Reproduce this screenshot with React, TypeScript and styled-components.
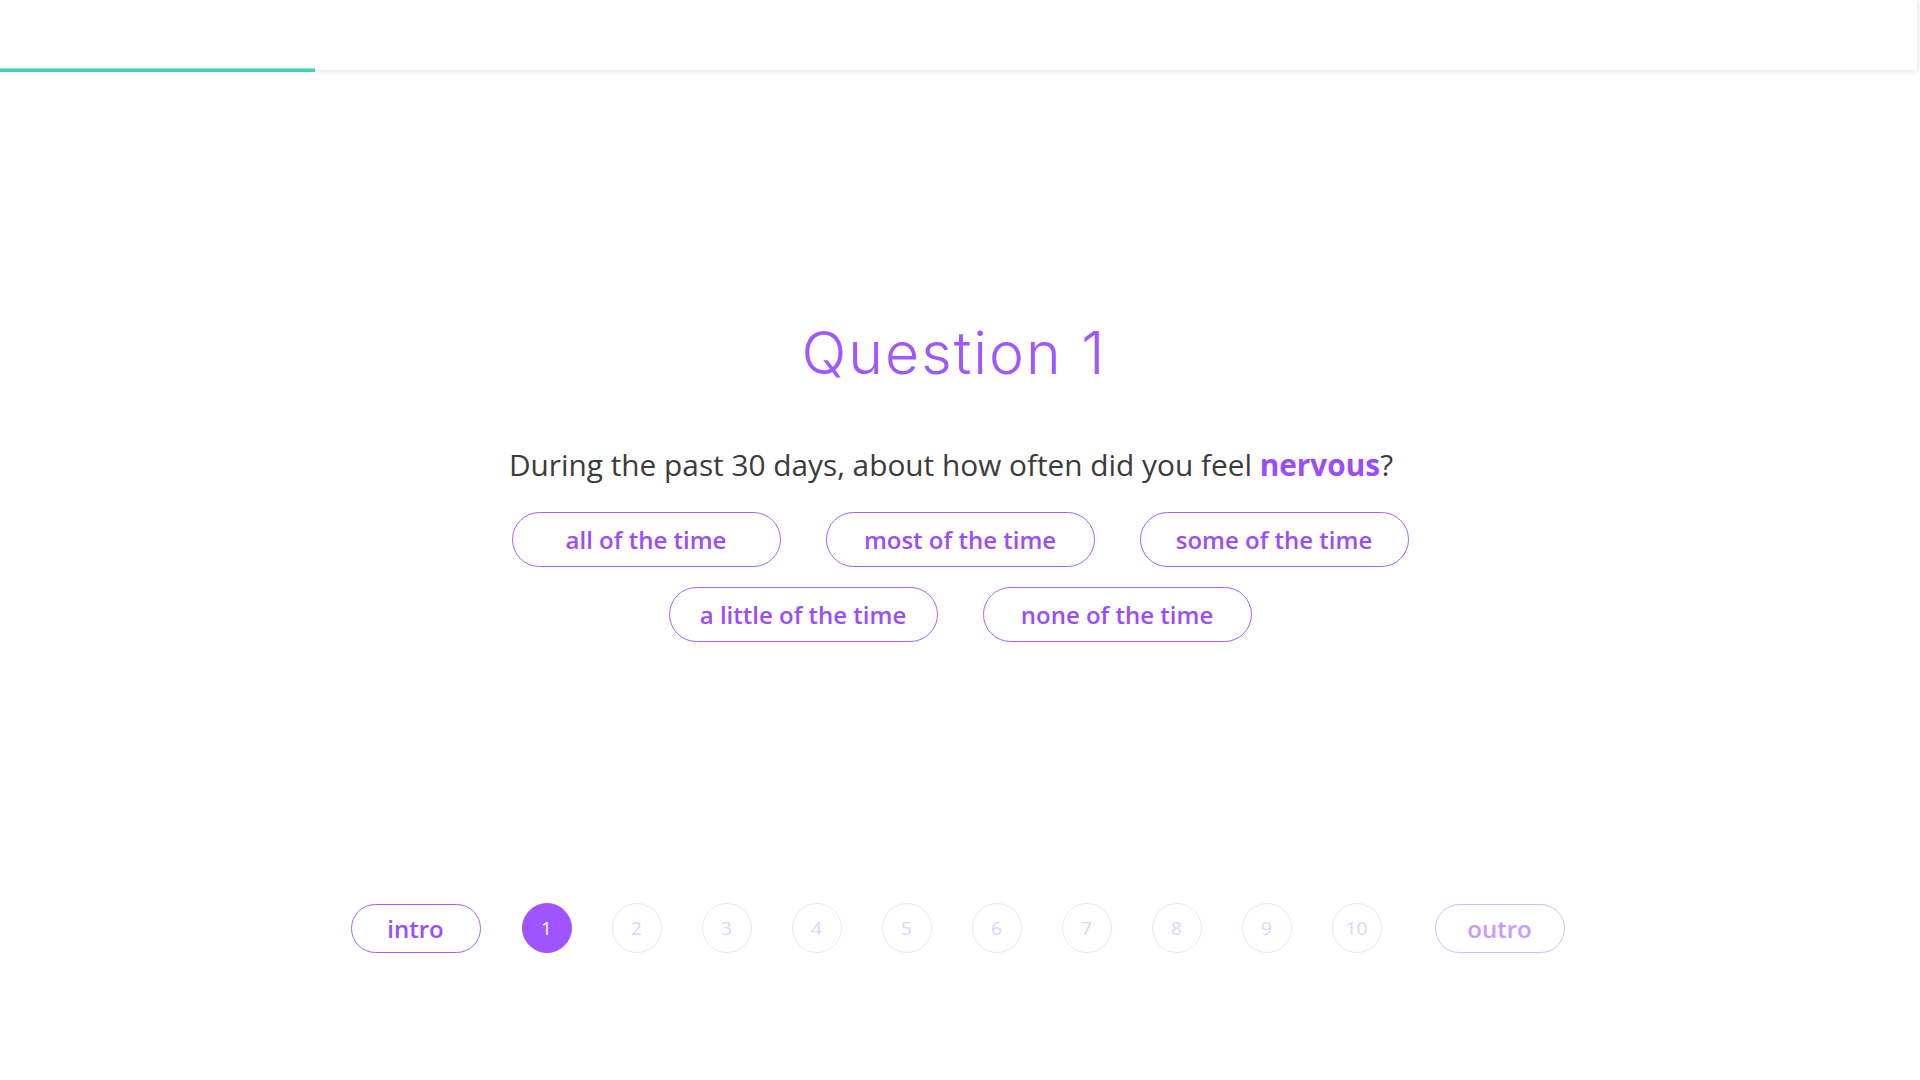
import React from "react";
import styled, { createGlobalStyle } from "styled-components";

const GlobalStyle = createGlobalStyle`
  html, body {
    margin: 0;
    padding: 0;
    background: #ffffff;
  }
  body {
    font-family: "Open Sans", "Noto Sans", sans-serif;
    -webkit-font-smoothing: antialiased;
  }
`;

const Page = styled.div`
  min-height: 1080px;
  display: flex;
  flex-direction: column;
  align-items: center;
`;

const Header = styled.header`
  position: relative;
  align-self: flex-start;
  width: calc(100% - 3px);
  height: 70px;
  background: #ffffff;
  box-shadow: 0 2px 5px rgba(0, 0, 0, 0.07), 2px 0 4px rgba(0, 0, 0, 0.05);
`;

const Progress = styled.div`
  position: absolute;
  left: 0;
  bottom: -2px;
  height: 4px;
  background: #3fcfb4;
  border-top: 1px solid #8ee3d3;
  box-sizing: border-box;
`;

const Title = styled.h1`
  margin: 247px 12px 0 0;
  font-family: Inter, "Noto Sans", sans-serif;
  font-weight: 300;
  font-size: 59px;
  line-height: 72px;
  color: #9f57ff;
  letter-spacing: 2px;
`;

const Prompt = styled.p`
  margin: 56px 18px 0 0;
  font-size: 29.8px;
  line-height: 40px;
  color: #3b3b3b;
`;

const Emph = styled.strong`
  font-weight: 700;
  color: #9a4dff;
`;

const Answers = styled.div`
  margin-top: 27px;
  display: flex;
  flex-direction: column;
  align-items: center;
  gap: 20px;
`;

const AnswerRow = styled.div`
  display: flex;
  gap: 45px;
`;

const Answer = styled.button`
  width: 269px;
  height: 55px;
  box-sizing: border-box;
  border: 1px solid #a462ff;
  border-radius: 28px;
  background: #ffffff;
  color: #9a4dff;
  font-family: "Open Sans", "Noto Sans", sans-serif;
  font-weight: 600;
  font-size: 24px;
  padding: 0;
  cursor: pointer;
`;

const Pager = styled.nav`
  margin-top: 261px;
  display: flex;
  align-items: center;
  margin-left: -5px;
`;

const Pill = styled.button<{ $faded?: boolean }>`
  width: 130px;
  height: 49px;
  box-sizing: border-box;
  border-radius: 25px;
  border: 1px solid ${(p) => (p.$faded ? "#d6b9ff" : "#a462ff")};
  background: #ffffff;
  color: ${(p) => (p.$faded ? "#c69aff" : "#9a4dff")};
  font-family: "Open Sans", "Noto Sans", sans-serif;
  font-weight: 600;
  font-size: 24px;
  padding: 0;
`;

const Steps = styled.div`
  display: flex;
  gap: 40px;
  margin: 0 53px 0 41px;
`;

const Step = styled.div<{ $active?: boolean }>`
  width: 50px;
  height: 50px;
  box-sizing: border-box;
  border-radius: 50%;
  display: flex;
  align-items: center;
  justify-content: center;
  border: 1px solid ${(p) => (p.$active ? "#9e55ff" : "#ede2ff")};
  background: ${(p) => (p.$active ? "#9e55ff" : "#ffffff")};
  color: ${(p) => (p.$active ? "#ffffff" : "#e3d1ff")};
  font-family: "Open Sans", "Noto Sans", sans-serif;
  font-size: 19px;
`;

const rows = [
  ["all of the time", "most of the time", "some of the time"],
  ["a little of the time", "none of the time"],
];

export default function App() {
  return (
    <>
      <GlobalStyle />
      <Page>
        <Header>
          <Progress style={{ width: 315 }} />
        </Header>
        <Title>Question 1</Title>
        <Prompt>
          During the past 30 days, about how often did you feel <Emph>nervous</Emph>?
        </Prompt>
        <Answers>
          {rows.map((r, i) => (
            <AnswerRow key={i}>
              {r.map((a) => (
                <Answer key={a}>{a}</Answer>
              ))}
            </AnswerRow>
          ))}
        </Answers>
        <Pager>
          <Pill>intro</Pill>
          <Steps>
            {Array.from({ length: 10 }, (_, i) => (
              <Step key={i} $active={i === 0}>
                {i + 1}
              </Step>
            ))}
          </Steps>
          <Pill $faded>outro</Pill>
        </Pager>
      </Page>
    </>
  );
}
